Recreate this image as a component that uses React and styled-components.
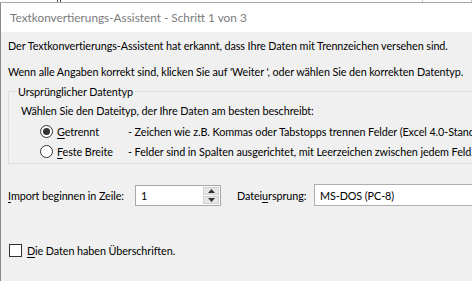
import React from "react";
import styled, { createGlobalStyle } from "styled-components";

const Global = createGlobalStyle`
  body {
    margin: 0;
    background: #ffffff;
    font-family: Lato, "Noto Sans", sans-serif;
    overflow: hidden;
  }
`;

const Sheet = styled.div`
  height: 2px;
  border-bottom: 1px solid #a8a8a8;
  display: flex;
`;

const SheetCell = styled.div`
  width: ${(p) => p.w}px;
  border-right: 1px solid ${(p) => p.line || "#c8c8c8"};
`;

const Window = styled.div`
  border-left: 1px solid #8a8a8a;
  height: 278px;
  background: #f0f0f0;
  display: flex;
  flex-direction: column;
  overflow: hidden;
`;

const TitleBar = styled.div`
  height: 29px;
  flex-shrink: 0;
  background: #ffffff;
  display: flex;
  align-items: center;
  padding-left: 9px;
  font-size: 11.8px;
  color: #7a7a7a;
`;

const Body = styled.div`
  padding: 0 0 0 7px;
  font-size: 10.8px;
  letter-spacing: -0.08px;
  color: #000;
`;

const Line = styled.div`
  height: ${(p) => p.h || 26}px;
  display: flex;
  align-items: center;
  white-space: nowrap;
`;

const Group = styled.fieldset`
  margin: 1px -40px 0 0;
  padding: 1px 0 2px 12px;
  border: 1px solid #dcdcdc;
  border-radius: 0;
`;

const Legend = styled.legend`
  padding: 0 2px;
  margin-left: -5px;
`;

const OptionRow = styled.div`
  height: 20px;
  display: flex;
  align-items: center;
  white-space: nowrap;
  padding-left: 19px;
`;

const Radio = styled.span`
  width: 13px;
  height: 13px;
  border-radius: 50%;
  border: 1px solid #333;
  background: #fff;
  box-sizing: border-box;
  display: flex;
  align-items: center;
  justify-content: center;
  margin-right: 4px;
  &::after {
    content: "";
    width: 7px;
    height: 7px;
    border-radius: 50%;
    background: ${(p) => (p.checked ? "#333" : "transparent")};
  }
`;

const OptLabel = styled.span`
  width: 71px;
`;

const Key = styled.span`
  text-decoration: underline;
  text-underline-offset: 2px;
`;

const FieldRow = styled.div`
  margin-top: 20px;
  height: 22px;
  display: flex;
  align-items: center;
  white-space: nowrap;
`;

const FieldLabel = styled.span`
  width: ${(p) => p.w}px;
`;

const Spinner = styled.div`
  width: 86px;
  height: 21px;
  border: 1px solid #a8a8a8;
  background: #fff;
  box-sizing: border-box;
  display: flex;
  align-items: stretch;
  margin-right: 16px;
`;

const SpinValue = styled.span`
  flex: 1;
  padding-left: 5px;
  display: flex;
  align-items: center;
`;

const SpinButtons = styled.div`
  width: 16px;
  display: flex;
  flex-direction: column;
  gap: 1px;
  padding: 1px 1px 1px 0;
`;

const SpinButton = styled.div`
  flex: 1;
  background: #e6e6e6;
  border: 1px solid #d0d0d0;
  display: flex;
  align-items: center;
  justify-content: center;
`;

const Combo = styled.div`
  flex: 1;
  height: 22px;
  margin-right: -20px;
  border: 1px solid #adadad;
  background: #fff;
  box-sizing: border-box;
  padding-left: 5px;
  display: flex;
  align-items: center;
`;

const CheckRow = styled.div`
  margin-top: 36px;
  height: 16px;
  display: flex;
  align-items: center;
  white-space: nowrap;
`;

const Box = styled.span`
  width: 13px;
  height: 13px;
  border: 1px solid #333;
  background: #fff;
  box-sizing: border-box;
  margin: 0 5px 0 1px;
`;

const Arrow = ({ down }) => (
  <svg width="7" height="4" viewBox="0 0 7 4">
    <path d={down ? "M0 0h7L3.5 4z" : "M0 4h7L3.5 0z"} fill="#333" />
  </svg>
);

export default function App() {
  return (
    <>
      <Global />
      <Sheet>
        <SheetCell w={57} line="#444" />
        <SheetCell w={3} line="#444" />
        <SheetCell w={364} />
        <SheetCell w={48} />
      </Sheet>
      <Window>
        <TitleBar>Textkonvertierungs-Assistent - Schritt 1 von 3</TitleBar>
        <Body>
          <Line>Der Textkonvertierungs-Assistent hat erkannt, dass Ihre Daten mit Trennzeichen versehen sind.</Line>
          <Line>Wenn alle Angaben korrekt sind, klicken Sie auf 'Weiter ', oder wählen Sie den korrekten Datentyp.</Line>
          <Group>
            <Legend>Ursprünglicher Datentyp</Legend>
            <Line h={22}>Wählen Sie den Dateityp, der Ihre Daten am besten beschreibt:</Line>
            <OptionRow>
              <Radio checked />
              <OptLabel>
                <Key>G</Key>etrennt
              </OptLabel>
              - Zeichen wie z.B. Kommas oder Tabstopps trennen Felder (Excel 4.0-Standard).
            </OptionRow>
            <OptionRow>
              <Radio />
              <OptLabel>
                <Key>F</Key>este Breite
              </OptLabel>
              - Felder sind in Spalten ausgerichtet, mit Leerzeichen zwischen jedem Feld.
            </OptionRow>
          </Group>
          <FieldRow>
            <FieldLabel w={127}>
              <Key>I</Key>mport beginnen in Zeile:
            </FieldLabel>
            <Spinner>
              <SpinValue>1</SpinValue>
              <SpinButtons>
                <SpinButton>
                  <Arrow />
                </SpinButton>
                <SpinButton>
                  <Arrow down />
                </SpinButton>
              </SpinButtons>
            </Spinner>
            <FieldLabel w={77}>
              Datei<Key>u</Key>rsprung:
            </FieldLabel>
            <Combo>MS-DOS (PC-8)</Combo>
          </FieldRow>
          <CheckRow>
            <Box />
            <span>
              <Key>D</Key>ie Daten haben Überschriften.
            </span>
          </CheckRow>
        </Body>
      </Window>
    </>
  );
}
